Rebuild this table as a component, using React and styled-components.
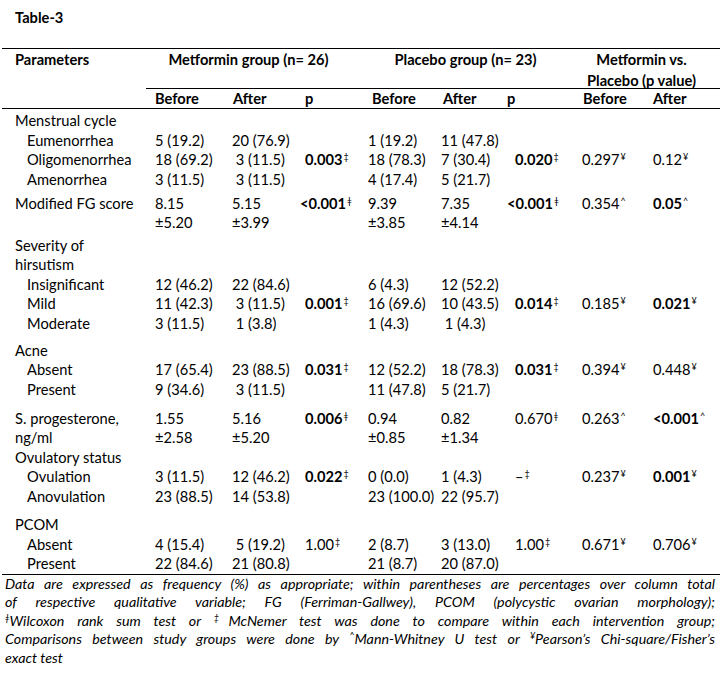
import React from 'react';
import styled, { createGlobalStyle } from 'styled-components';

const GlobalStyle = createGlobalStyle`
  html, body { margin: 0; padding: 0; background: #ffffff; }
  body { font-family: Lato, "Open Sans", sans-serif; color: #000; }
`;

const COLS = '144px 79px 73px 65px 72px 72px 66px 72px 75px';
const DATA_PADS = [13, 9, 7, 7, 5, 6, 8, 9, 8];
const HEAD_PADS = [13, 9, 8, 7, 9, 8, 0, 10, 8];

const Page = styled.div`
  width: 720px;
  height: 674px;
  overflow: hidden;
  box-sizing: border-box;
  padding-top: 8px;
  background: #fff;
`;

const Title = styled.div`
  font-weight: 700;
  font-size: 14.67px;
  line-height: 20px;
  padding-left: 15px;
  margin-bottom: 20px;
`;

const Table = styled.div`
  margin-left: 2px;
  width: 718px;
  font-size: 14.67px;
`;

const HeadTop = styled.div`
  display: grid;
  grid-template-columns: ${COLS};
  border-top: 1px solid #000;
  height: 39px;
  font-weight: 700;
  line-height: 21px;
`;

const HeadLabel = styled.div`
  grid-column: ${p => p.$cols};
  text-align: ${p => (p.$center ? 'center' : 'left')};
  padding-left: ${p => p.$padLeft || 0}px;
  padding-right: ${p => p.$padRight || 0}px;
`;

const HeadSub = styled.div`
  display: grid;
  grid-template-columns: ${COLS};
  border-bottom: 1px solid #000;
  font-weight: 700;
  line-height: 19px;
`;

const SubCell = styled.div`
  padding-left: ${p => p.$pad}px;
  border-top: ${p => (p.$ruled ? '1px solid #000' : '1px solid transparent')};
`;

const Body = styled.div`
  padding-top: 2px;
  border-bottom: 1px solid #000;
`;

const Group = styled.div`
  margin-top: ${p => p.$gap}px;
`;

const Row = styled.div`
  display: grid;
  grid-template-columns: ${COLS};
  line-height: 19.5px;
  height: 19.5px;
`;

const Cell = styled.div`
  padding-left: ${p => p.$pad}px;
  white-space: pre;
  font-weight: ${p => (p.$bold ? 700 : 400)};
`;

const Mark = styled.sup`
  font-size: 9px;
  line-height: 0;
  vertical-align: 5px;
  font-weight: 400;
  margin-left: 1px;
`;

const Footnote = styled.div`
  padding: 0 5px 0 5px;
  font-style: italic;
  font-size: 14.3px;
  line-height: 18.5px;
`;

const NoteLine = styled.div`
  text-align: ${p => (p.$last ? 'left' : 'justify')};
  text-align-last: ${p => (p.$last ? 'left' : 'justify')};
`;

const NoteMark = styled.sup`
  font-size: 9px;
  line-height: 0;
  vertical-align: 5px;
`;

const P = (v, m, b, hang = 0) => ({ v, m, b, hang });

const groups = [
  {
    gap: 0,
    rows: [
      { label: 'Menstrual cycle' },
      { label: 'Eumenorrhea', sub: true, c: ['5 (19.2)', '20 (76.9)', '', '1 (19.2)', '11 (47.8)'] },
      { label: 'Oligomenorrhea', sub: true, c: ['18 (69.2)', ' 3 (11.5)', P('0.003', '‡', 1), '18 (78.3)', '7 (30.4)', P('0.020', '‡', 1), P('0.297', '¥'), P('0.12', '¥')] },
      { label: 'Amenorrhea', sub: true, c: ['3 (11.5)', ' 3 (11.5)', '', '4 (17.4)', '5 (21.7)'] },
    ],
  },
  {
    gap: 4.5,
    rows: [
      { label: 'Modified FG score', c: ['8.15', '5.15', P('<0.001', 'ǂ', 1, 5), '9.39', '7.35', P('<0.001', 'ǂ', 1, 8), P('0.354', '^'), P('0.05', '^', 1)] },
      { label: '', c: ['±5.20', '±3.99', '', '±3.85', '±4.14'] },
    ],
  },
  {
    gap: 3,
    rows: [
      { label: 'Severity of' },
      { label: 'hirsutism' },
      { label: 'Insignificant', sub: true, c: ['12 (46.2)', '22 (84.6)', '', '6 (4.3)', '12 (52.2)'] },
      { label: 'Mild', sub: true, c: ['11 (42.3)', ' 3 (11.5)', P('0.001', '‡', 1), '16 (69.6)', '10 (43.5)', P('0.014', '‡', 1), P('0.185', '¥'), P('0.021', '¥', 1)] },
      { label: 'Moderate', sub: true, c: ['3 (11.5)', ' 1 (3.8)', '', '1 (4.3)', ' 1 (4.3)'] },
    ],
  },
  {
    gap: 7.5,
    rows: [
      { label: 'Acne' },
      { label: 'Absent', sub: true, c: ['17 (65.4)', '23 (88.5)', P('0.031', '‡', 1), '12 (52.2)', '18 (78.3)', P('0.031', '‡', 1), P('0.394', '¥'), P('0.448', '¥')] },
      { label: 'Present', sub: true, c: ['9 (34.6)', ' 3 (11.5)', '', '11 (47.8)', '5 (21.7)'] },
    ],
  },
  {
    gap: 9.5,
    rows: [
      { label: 'S. progesterone,', c: ['1.55', '5.16', P('0.006', 'ǂ', 1), '0.94', '0.82', P('0.670', 'ǂ'), P('0.263', '^'), P('<0.001', '^', 1)] },
      { label: 'ng/ml', c: ['±2.58', '±5.20', '', '±0.85', '±1.34'] },
    ],
  },
  {
    gap: 0,
    rows: [
      { label: 'Ovulatory status' },
      { label: 'Ovulation', sub: true, c: ['3 (11.5)', '12 (46.2)', P('0.022', '‡', 1), '0 (0.0)', '1 (4.3)', P('–', '‡'), P('0.237', '¥'), P('0.001', '¥', 1)] },
      { label: 'Anovulation', sub: true, c: ['23 (88.5)', '14 (53.8)', '', '23 (100.0)', '22 (95.7)'] },
    ],
  },
  {
    gap: 9,
    rows: [
      { label: 'PCOM' },
      { label: 'Absent', sub: true, c: ['4 (15.4)', ' 5 (19.2)', P('1.00', '‡'), '2 (8.7)', '3 (13.0)', P('1.00', '‡'), P('0.671', '¥'), P('0.706', '¥')] },
      { label: 'Present', sub: true, c: ['22 (84.6)', '21 (80.8)', '', '21 (8.7)', '20 (87.0)'] },
    ],
  },
];

function DataCell({ value, pad }) {
  if (value && typeof value === 'object') {
    return (
      <Cell $pad={pad - value.hang} $bold={!!value.b}>
        {value.v}
        <Mark>{value.m}</Mark>
      </Cell>
    );
  }
  return <Cell $pad={pad}>{value || ''}</Cell>;
}

export default function App() {
  return (
    <Page>
      <GlobalStyle />
      <Title>Table-3</Title>
      <Table>
        <HeadTop>
          <HeadLabel $cols="1 / 2" $padLeft={13}>Parameters</HeadLabel>
          <HeadLabel $cols="2 / 5" $center $padRight={12}>Metformin group (n= 26)</HeadLabel>
          <HeadLabel $cols="5 / 8" $center $padRight={5}>Placebo group (n= 23)</HeadLabel>
          <HeadLabel $cols="8 / 10" $center $padRight={10}>
            Metformin vs.
            <br />
            Placebo (p value)
          </HeadLabel>
        </HeadTop>
        <HeadSub>
          {['', 'Before', 'After', 'p', 'Before', 'After', 'p', 'Before', 'After'].map((t, i) => (
            <SubCell key={i} $pad={HEAD_PADS[i]} $ruled={i > 0}>
              {t}
            </SubCell>
          ))}
        </HeadSub>
        <Body>
          {groups.map((g, gi) => (
            <Group key={gi} $gap={g.gap}>
              {g.rows.map((r, ri) => {
                const cells = r.c || [];
                return (
                  <Row key={ri}>
                    <Cell $pad={DATA_PADS[0] + (r.sub ? 12 : 0)}>{r.label}</Cell>
                    {Array.from({ length: 8 }).map((_, ci) => (
                      <DataCell key={ci} value={cells[ci]} pad={DATA_PADS[ci + 1]} />
                    ))}
                  </Row>
                );
              })}
            </Group>
          ))}
        </Body>
      </Table>
      <Footnote>
        <NoteLine>
          Data are expressed as frequency (%) as appropriate; within parentheses are percentages over column total
        </NoteLine>
        <NoteLine>
          of respective qualitative variable; FG (Ferriman-Gallwey), PCOM (polycystic ovarian morphology);
        </NoteLine>
        <NoteLine>
          <NoteMark>ǂ</NoteMark>Wilcoxon rank sum test or <NoteMark>‡</NoteMark>McNemer test was done to compare within each intervention group;
        </NoteLine>
        <NoteLine>
          Comparisons between study groups were done by <NoteMark>^</NoteMark>Mann-Whitney U test or <NoteMark>¥</NoteMark>Pearson’s Chi-square/Fisher’s
        </NoteLine>
        <NoteLine $last>exact test</NoteLine>
      </Footnote>
    </Page>
  );
}
